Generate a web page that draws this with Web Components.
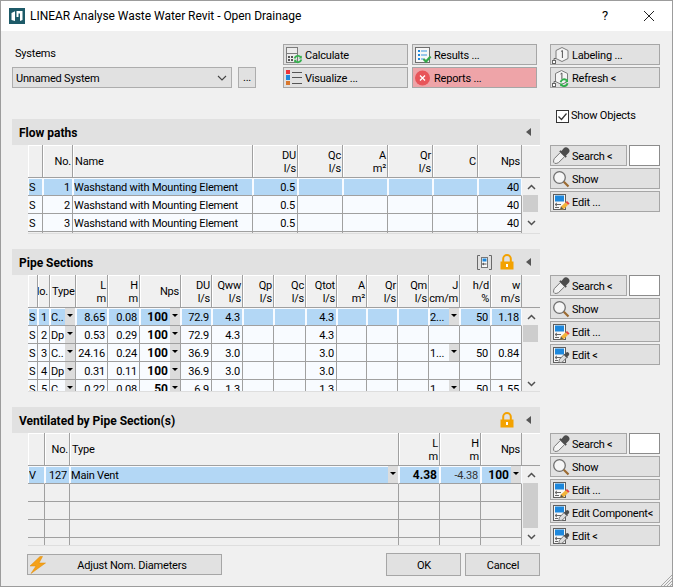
<!DOCTYPE html>
<html lang="en"><head><meta charset="utf-8"><title>LINEAR</title>
<style>
html,body{margin:0;padding:0;background:#f0f0f0}
body{font:11px Roboto,"Liberation Sans",sans-serif;color:#000}
</style></head>
<body>
<app-dialog>
  <title-bar title="LINEAR Analyse Waste Water Revit - Open Drainage"></title-bar>
  <top-row>
    <systems-box slot="systems" value="Unnamed System" label="Systems"></systems-box>
    <ui-button slot="a" icon="calc">Calculate</ui-button>
    <ui-button slot="a" icon="results">Results ...</ui-button>
    <ui-button slot="a" icon="vis">Visualize ...</ui-button>
    <ui-button slot="a" icon="reports" variant="danger">Reports ...</ui-button>
    <ui-button slot="b" icon="label">Labeling ...</ui-button>
    <ui-button slot="b" icon="labelr">Refresh &lt;</ui-button>
    <check-box slot="b" checked>Show Objects</check-box>
  </top-row>

  <panel-row>
    <section-panel heading="Flow paths">
      <grid-table id="t1" height="88"></grid-table>
    </section-panel>
    <side-stack slot="side">
      <search-line></search-line>
      <ui-button icon="glass">Show</ui-button>
      <ui-button icon="editp">Edit ...</ui-button>
    </side-stack>
  </panel-row>

  <panel-row gap>
    <section-panel heading="Pipe Sections">
      <ui-icon slot="actions" name="note" style="margin-right:7px"></ui-icon>
      <ui-icon slot="actions" name="lock"></ui-icon>
      <grid-table id="t2" height="116"></grid-table>
    </section-panel>
    <side-stack slot="side">
      <search-line></search-line>
      <ui-button icon="glass">Show</ui-button>
      <ui-button icon="editp">Edit ...</ui-button>
      <ui-button icon="editd">Edit &lt;</ui-button>
    </side-stack>
  </panel-row>

  <panel-row gap>
    <section-panel heading="Ventilated by Pipe Section(s)">
      <ui-icon slot="actions" name="lock"></ui-icon>
      <grid-table id="t3" height="112"></grid-table>
    </section-panel>
    <side-stack slot="side">
      <search-line></search-line>
      <ui-button icon="glass">Show</ui-button>
      <ui-button icon="editp">Edit ...</ui-button>
      <ui-button icon="editd">Edit Component&lt;</ui-button>
      <ui-button icon="editd">Edit &lt;</ui-button>
    </side-stack>
  </panel-row>

  <foot-bar>
    <ui-button slot="left" icon="bolt" center style="width:195px">Adjust Nom. Diameters</ui-button>
    <ui-button slot="right" center style="width:75px;height:23px">OK</ui-button>
    <ui-button slot="right" center style="width:75px;height:23px">Cancel</ui-button>
  </foot-bar>
</app-dialog>

<script>
const ICONS={
 calc:`<svg width="18" height="18" viewBox="0 0 18 18"><rect x="1.500" y="1.500" width="11" height="15" fill="#ececec" stroke="#7c7c7c"/><path d="M2 7.500h10" stroke="#7c7c7c"/><path d="M3 10h2v2H3zM6 10h2v2H6zM3 13h2v2H3zM6 13h2v2H6z" fill="#555"/><path d="M9.600 12.500a3.600 3.600 0 0 1 6.200-1.400M16.400 13.600a3.600 3.600 0 0 1-6.200 1.400" fill="none" stroke="#35b04e" stroke-width="1.800"/><path d="M16.800 9.400v3h-3zM9.200 16.800v-3h3z" fill="#35b04e"/></svg>`,
 vis:`<svg width="18" height="18" viewBox="0 0 18 18"><rect x="1" y="1" width="4" height="4" fill="#ee3338"/><rect x="1" y="6" width="4" height="5" fill="#1e88dc"/><rect x="1" y="12" width="4" height="4" fill="#d9772c"/><path d="M7 3.500h10M7 8.500h10M7 14.500h10" stroke="#555"/></svg>`,
 results:`<svg width="18" height="18" viewBox="0 0 18 18"><rect x="1.500" y="1.500" width="14" height="15" fill="#f7f7f7" stroke="#6f6f6f"/><path d="M4 4h2v2H4zM4 8h2v2H4zM4 12h2v2H4z" fill="#1e88dc"/><path d="M7 5h6M7 9h6M7 13h3" stroke="#3b97e0"/><path d="M9.500 13l2.500 2.600 4.600-5" fill="none" stroke="#35a84a" stroke-width="2.200"/></svg>`,
 reports:`<svg width="18" height="18" viewBox="0 0 18 18"><circle cx="8.500" cy="9" r="7.500" fill="#e8555a"/><path d="M6 6.500l5 5M11 6.500l-5 5" stroke="#fff" stroke-width="1.300"/></svg>`,
 label:`<svg width="18" height="18" viewBox="0 0 18 18"><path d="M10 1.500l6 3v8l-6 3-6-3v-8z" fill="#f4f4f4" stroke="#7c7c7c"/><path d="M9 5.500l1.400-1V12" fill="none" stroke="#555"/><path d="M4 12.500H2v3" fill="none" stroke="#6a6a6a"/><rect x="0.500" y="14.500" width="3" height="3" fill="#fff" stroke="#666"/></svg>`,
 labelr:`<svg width="18" height="18" viewBox="0 0 18 18"><path d="M9.500 1.500l6 3v8l-6 3-6-3v-8z" fill="#f4f4f4" stroke="#7c7c7c"/><path d="M8.500 5l1.400-1V10" fill="none" stroke="#555"/><path d="M4 12.500H2v3" fill="none" stroke="#6a6a6a"/><rect x="0.500" y="14.500" width="3" height="3" fill="#fff" stroke="#666"/><path d="M8.600 13.200a3.700 3.700 0 0 1 6.400-1.600M15.600 14.200a3.700 3.700 0 0 1-6.400 1.600" fill="none" stroke="#2fae4a" stroke-width="1.900"/><path d="M16 9.900v3h-3zM8.200 17.600v-3h3z" fill="#2fae4a"/></svg>`,
 drop:`<svg width="18" height="18" viewBox="0 0 18 18"><path d="M11.500 1.500a2.800 2.800 0 0 1 5 4.500l-2.500 2.500 .8 1-1.300 1.300-6.300-6.300 1.300-1.300 1 .8z" fill="#4d4d4d"/><path d="M8 5.800L2.400 11.500c-.7.800-1 2.400-.8 3.700l1.200 1.200c1.300.2 2.900-.1 3.700-.8l5.700-5.600" fill="#f3f3f3" stroke="#777"/></svg>`,
 glass:`<svg width="18" height="18" viewBox="0 0 18 18"><circle cx="7.500" cy="7.500" r="5.800" fill="#f6f6f6" stroke="#6f6f6f" stroke-width="1.300"/><path d="M11.800 11.800l4.700 4.700" stroke="#9c6b32" stroke-width="2.200"/></svg>`,
 editp:`<svg width="18" height="18" viewBox="0 0 18 18"><rect x="1.500" y="1.500" width="12" height="15" fill="#f7f7f7" stroke="#5f5f5f"/><rect x="3" y="2.500" width="9" height="6" fill="#1e88dc"/><path d="M3 11.500h6M3 11.500l2-1.600M3 11.500l2 1.600M3 14.500h4" stroke="#666" fill="none"/><path d="M8 17l1-3.400 4.600-4.400 2.600 2.600-4.600 4.400z" fill="#f2b33a"/><path d="M13.600 9.200l1.400-1.300 2.600 2.600-1.400 1.300z" fill="#e8403f"/><path d="M8 17l1-3.400 2.400 2.400z" fill="#555"/></svg>`,
 editd:`<svg width="18" height="18" viewBox="0 0 18 18"><rect x="1.500" y="1.500" width="12" height="15" fill="#f7f7f7" stroke="#5f5f5f"/><rect x="3" y="2.500" width="9" height="6" fill="#1e88dc"/><path d="M3 11.500h6M3 11.500l2-1.600M3 11.500l2 1.600M3 14.500h3" stroke="#666" fill="none"/><path d="M14 6.800a1.800 1.800 0 0 1 2.700 2.600l-1.300 1.300.5.700-1 .9-3.600-3.600.9-.9.7.5z" fill="#4d4d4d"/><path d="M11.700 9L7.600 13.200c-.5.600-.6 1.600-.5 2.400l.9.900c.8.100 1.800 0 2.400-.5l4.100-4.200" fill="#dcdcdc" stroke="#777"/></svg>`,
 lock:`<svg width="14" height="16" viewBox="0 0 14 16"><path d="M3.200 8V4.800a3.800 3.800 0 0 1 7.600 0V8" fill="none" stroke="#f3a200" stroke-width="2"/><rect x="0.500" y="7.500" width="13" height="8" fill="#f3a200"/><rect x="6" y="10" width="2" height="3" fill="#fff"/></svg>`,
 note:`<svg width="17" height="17" viewBox="0 0 17 17"><path d="M4 1.500H1.500v14H4M13 1.500h2.500v14H13" fill="none" stroke="#6a6a6a"/><rect x="5.500" y="3.500" width="6" height="10" fill="#fafafa" stroke="#777"/><rect x="6.500" y="4.500" width="4" height="3" fill="#1e88dc"/><path d="M6.500 10h4M6.500 10l1.500-1M6.500 10l1.500 1" stroke="#555" fill="none"/></svg>`,
 bolt:`<svg width="18" height="18" viewBox="0 0 18 18"><path d="M11 .5L1 10h6l-5 7.500L16.500 7H10l3.500-6.500z" fill="#f4a11a" stroke="#e08a00" stroke-width=".5"/></svg>`
};
function shadow(el,html){const r=el.attachShadow({mode:'open'});r.innerHTML=html;return r;}

customElements.define('ui-icon',class extends HTMLElement{connectedCallback(){if(this.shadowRoot)return;
 shadow(this,`<style>:host{display:inline-flex;align-items:center;justify-content:center;flex:none}svg{display:block}</style>${ICONS[this.getAttribute('name')]||''}`);}});

customElements.define('app-dialog',class extends HTMLElement{constructor(){super();
 shadow(this,`<style>
 :host{display:block;box-sizing:border-box;width:673px;height:587px;border:1px solid #9c9c9c;background:#f0f0f0;overflow:hidden;position:relative;font:11px/16px Roboto,"Liberation Sans",sans-serif;letter-spacing:-.2px;color:#000}
 .grip{position:absolute;right:0;bottom:0}
 </style><slot></slot><svg class="grip" width="12" height="12" viewBox="0 0 12 12"><path d="M12 1L1 12M12 4L4 12M12 7L7 12M12 10L10 12" stroke="#a8a8a8"/></svg>`);}});

customElements.define('title-bar',class extends HTMLElement{connectedCallback(){if(this.shadowRoot)return;
 shadow(this,`<style>
 :host{display:flex;align-items:center;height:30px;background:#fff;padding-left:8px;font-size:12px;letter-spacing:-.04px}
 .t{margin-left:5px;flex:1;white-space:nowrap}
 .q{width:16px;text-align:center;margin-right:30px;font-size:13px}
 svg{display:block}
 </style>
 <svg width="16" height="16" viewBox="0 0 16 16"><rect width="16" height="16" fill="#1d5a68"/><path d="M2.500 5l3.500-1.800V13l-3.500-1zM7.500 3h6v9l-2.500 1V5.500H9.500V9h-2z" fill="#fff"/></svg>
 <span class="t">${this.getAttribute('title')}</span><span class="q">?</span>
 <svg width="12" height="12" viewBox="0 0 12 12" style="margin-right:17px"><path d="M1 1l10 10M11 1L1 11" stroke="#222"/></svg>`);}});

customElements.define('top-row',class extends HTMLElement{constructor(){super();
 shadow(this,`<style>
 :host{display:flex;height:88px;padding-left:11px;box-sizing:border-box;padding-top:13px;align-items:flex-start}
 .s{width:271px;flex:none}
 .a{display:grid;grid-template-columns:125px 125px;gap:2px 4px;grid-auto-rows:21px}
 .b{margin-left:13px;width:110px;display:flex;flex-direction:column;gap:2px}
 </style><div class="s"><slot name="systems"></slot></div><div class="a"><slot name="a"></slot></div><div class="b"><slot name="b"></slot></div>`);}});

customElements.define('systems-box',class extends HTMLElement{connectedCallback(){if(this.shadowRoot)return;
 shadow(this,`<style>
 :host{display:block}
 .l{height:23px;padding:1px 0 0 3px;box-sizing:border-box;line-height:18px}
 .r{display:flex;gap:6px}
 .c{width:220px;height:21px;box-sizing:border-box;border:1px solid #adadad;background:#e1e1e1;display:flex;align-items:center;padding:0 4px 0 3px;justify-content:space-between}
 .c span{padding-top:2px}
 .d{width:18px;height:21px;box-sizing:border-box;border:1px solid #adadad;background:#e1e1e1;text-align:center;line-height:20px}
 svg{display:block}
 </style><div class="l">${this.getAttribute('label')}</div><div class="r"><div class="c"><span>${this.getAttribute('value')}</span><svg width="10" height="6" viewBox="0 0 10 6"><path d="M1 1l4 4 4-4" fill="none" stroke="#444" stroke-width="1.100"/></svg></div><div class="d">...</div></div>`);}});

customElements.define('ui-button',class extends HTMLElement{connectedCallback(){if(this.shadowRoot)return;
 const ic=this.getAttribute('icon'),dg=this.getAttribute('variant')==='danger',ctr=this.hasAttribute('center');
 shadow(this,`<style>
 :host{display:flex;box-sizing:border-box;height:21px;border:1px solid #a6a6a6;background:${dg?'#eea4a8':'#e1e1e1'};align-items:center;position:relative;white-space:nowrap;overflow:hidden;padding-left:1px}
 .i{width:20px;height:19px;display:flex;align-items:center;justify-content:flex-start;flex:none}
 .t{padding-top:2px;${ctr?'flex:1;text-align:center;':''}${ctr&&ic?'padding-right:6px;':''}}
 </style>${ic?`<span class="i"><ui-icon name="${ic}"></ui-icon></span>`:''}<span class="t"><slot></slot></span>`);}});

customElements.define('check-box',class extends HTMLElement{connectedCallback(){if(this.shadowRoot)return;
 shadow(this,`<style>
 :host{display:flex;align-items:center;height:16px;margin:18px 0 0 6px;gap:2px;white-space:nowrap}
 svg{display:block}
 </style><svg width="13" height="13" viewBox="0 0 13 13"><rect x=".5" y=".5" width="12" height="12" fill="#fff" stroke="#333"/><path d="M2.500 6.500l3 3 5-6" fill="none" stroke="#333" stroke-width="1.200"/></svg><slot></slot>`);}});

customElements.define('panel-row',class extends HTMLElement{connectedCallback(){if(this.shadowRoot)return;
 shadow(this,`<style>
 :host{display:grid;grid-template-columns:528px 110px;column-gap:10px;padding-left:11px;margin-top:${this.hasAttribute('gap')?15:0}px}
 </style><slot></slot><slot name="side"></slot>`);}});

customElements.define('section-panel',class extends HTMLElement{connectedCallback(){if(this.shadowRoot)return;
 shadow(this,`<style>
 :host{display:block}
 .h{height:26px;background:#e1e1e1;display:flex;align-items:center;padding-left:7px;font-weight:700;font-size:12px;letter-spacing:0;box-sizing:border-box}
 .n{flex:1;padding-top:2px}
 .a{display:flex;align-items:center;margin-right:12px}
 .tri{width:0;height:0;border:4px solid transparent;border-right:5px solid #555;border-left:0;margin-right:9px}
 .b{margin-left:16px;border-bottom:1px solid #dedede}
 </style><div class="h"><span class="n">${this.getAttribute('heading')}</span><span class="a"><slot name="actions"></slot></span><span class="tri"></span></div><div class="b"><slot></slot></div>`);}});

customElements.define('side-stack',class extends HTMLElement{constructor(){super();
 shadow(this,`<style>:host{display:flex;flex-direction:column;gap:2px;padding-top:26px}</style><slot></slot>`);}});

customElements.define('search-line',class extends HTMLElement{connectedCallback(){if(this.shadowRoot)return;
 shadow(this,`<style>
 :host{display:flex;gap:2px}
 ui-button{width:77px}
 .w{width:31px;height:21px;box-sizing:border-box;background:#fff;border:1px solid #8c8c8c}
 </style><ui-button icon="drop">Search &lt;</ui-button><div class="w"></div>`);}});

customElements.define('foot-bar',class extends HTMLElement{constructor(){super();
 shadow(this,`<style>
 :host{display:flex;align-items:center;height:23px;margin-top:7px;width:513px;padding-left:26px}
 .r{margin-left:auto;display:flex;gap:4px}
 </style><slot name="left"></slot><div class="r"><slot name="right"></slot></div>`);}});

customElements.define('grid-table',class extends HTMLElement{
 set data(d){
  const esc=s=>String(s).replace(/&/g,'&amp;').replace(/</g,'&lt;');
  const head=d.cols.map(c=>{const[a,b]=(c.h||'').split('\n');
    return `<div class="c hd ${c.l?'l':''}"><span>${esc(a)}${b?'<br>'+esc(b):''}</span></div>`}).join('');
  const body=d.rows.map(r=>d.cols.map((c,i)=>{
    let v=r.cells?r.cells[i]:'';v=v==null?'':v;
    const dd=c.dd&&(c.dd===1||v!=='');
    const light=c.light?' light':'';
    return `<div class="c ${r.sel?'sel':''} ${r.blank?'blank':''} ${c.l||c.jl?'l':''}"><span class="v ${c.b||(r.boldIdx&&r.boldIdx.includes(i))?'bd':''}${light}">${esc(v)}</span>${dd&&!r.blank?'<i class="dd"></i>':''}</div>`}).join('')).join('');
  const h=this.getAttribute('height');
  const sb=d.sb;
  shadow(this,`<style>
  :host{display:flex;height:${h}px;overflow:hidden}
  .g{display:grid;grid-template-columns:${d.cols.map(c=>c.w+'px').join(' ')};grid-template-rows:33px;grid-auto-rows:18px;width:494px;height:${h}px;overflow:hidden;flex:none;line-height:16px}
  .c{box-sizing:border-box;border-right:1px solid #a0a0a0;border-bottom:1px solid #a0a0a0;background:#f8fbff;display:flex;min-width:0;overflow:hidden}
  .blank{background:#f0f0f0}
  .hd{background:#f0f0f0;box-shadow:inset 1px 1px 0 #fff;align-items:center;justify-content:flex-end;text-align:right;padding:1px 1px 0 0;white-space:nowrap;line-height:13px}
  .hd span{flex:none}
  .hd.l{justify-content:flex-start;text-align:left;padding-left:2px}
  .v{flex:1;min-width:0;text-align:right;padding:2px 2px 0 1px;white-space:nowrap;overflow:hidden;line-height:15px}
  .l .v{text-align:left;padding-left:1px}
  .sel{border-right-color:#f8fbff}
  .sel .v{background:#b3d7f5;margin:1px 0 0 1px;line-height:15px;padding:1px 2px 0 0}
  .bd{font-weight:700;font-size:12px;letter-spacing:0}
  .light{color:#333}
  .dd{flex:none;width:10px;background:#dcdcdc;position:relative}
  .dd::after{content:"";position:absolute;left:2px;top:6px;border:3px solid transparent;border-top:3px solid #000;border-bottom:0}
  .sb{width:18px;flex:none;display:flex;flex-direction:column;background:#f0f0f0}
  .sh{height:33px;box-sizing:border-box;border-bottom:1px solid #a0a0a0;flex:none;box-shadow:inset 0 1px 0 #fff}
  .ar{height:17px;flex:none;display:flex;align-items:center;justify-content:center}
  .th{height:${sb.th}px;flex:none;background:#cdcdcd;margin:0 2px 0 1px}
  .sp{flex:1}
  svg{display:block}
  </style><div class="g">${head}${body}</div>
  <div class="sb"><div class="sh"></div><div class="ar"><svg width="9" height="6" viewBox="0 0 9 6"><path d="M1 5l3.500-3.500L8 5" fill="none" stroke="#505050" stroke-width="1.500"/></svg></div><div class="th"></div><div class="sp"></div><div class="ar" style="height:${sb.dh||17}px"><svg width="9" height="6" viewBox="0 0 9 6"><path d="M1 1l3.500 3.500L8 1" fill="none" stroke="#505050" stroke-width="1.500"/></svg></div></div>`);
 }
});

const t1=document.getElementById('t1');
t1.data={sb:{th:17,dh:21},cols:[{w:15,h:'',l:1},{w:30,h:'No.'},{w:180,h:'Name',l:1},{w:45,h:'DU\nl/s'},{w:45,h:'Qc\nl/s'},{w:45,h:'A\nm²'},{w:45,h:'Qr\nl/s'},{w:45,h:'C'},{w:44,h:'Nps'}],
 rows:[{sel:1,cells:['S',1,'Washstand with Mounting Element','0.5','','','','',40]},
       {cells:['S',2,'Washstand with Mounting Element','0.5','','','','',40]},
       {cells:['S',3,'Washstand with Mounting Element','0.5','','','','',40]},
       {blank:1}]};
const t2=document.getElementById('t2');
t2.data={sb:{th:17,dh:15},cols:[{w:10,h:'',l:1},{w:12,h:'lo.'},{w:26,h:'Type',l:1,dd:1},{w:32,h:'L\nm'},{w:32,h:'H\nm'},{w:41,h:'Nps',b:1,dd:1},{w:31,h:'DU\nl/s'},{w:31,h:'Qww\nl/s'},{w:31,h:'Qp\nl/s'},{w:32,h:'Qc\nl/s'},{w:31,h:'Qtot\nl/s'},{w:30,h:'A\nm²'},{w:31,h:'Qr\nl/s'},{w:31,h:'Qm\nl/s'},{w:31,h:'J\ncm/m',dd:2,jl:1},{w:31,h:'h/d\n%'},{w:31,h:'w\nm/s'}],
 rows:[{sel:1,cells:['S',1,'C..','8.65','0.08',100,'72.9','4.3','','','4.3','','','','2...',50,'1.18']},
       {cells:['S',2,'Dp','0.53','0.29',100,'72.9','4.3','','','4.3','','','','','','']},
       {cells:['S',3,'C..','24.16','0.24',100,'36.9','3.0','','','3.0','','','','1...',50,'0.84']},
       {cells:['S',4,'Dp','0.31','0.11',100,'36.9','3.0','','','3.0','','','','','','']},
       {cells:['S',5,'C..','0.22','0.08',50,'6.9','1.3','','','1.3','','','','1...',50,'1.55']}]};
const t3=document.getElementById('t3');
t3.data={sb:{th:45,dh:18},cols:[{w:17,h:'',l:1},{w:25,h:'No.'},{w:329,h:'Type',l:1,dd:2},{w:41,h:'L\nm'},{w:41,h:'H\nm',light:1},{w:41,h:'Nps',b:1,dd:2}],
 rows:[{sel:1,boldIdx:[3],cells:['V',127,'Main Vent','4.38','-4.38',100]},{blank:1},{blank:1},{blank:1},{blank:1}]};
</script>
</body></html>
